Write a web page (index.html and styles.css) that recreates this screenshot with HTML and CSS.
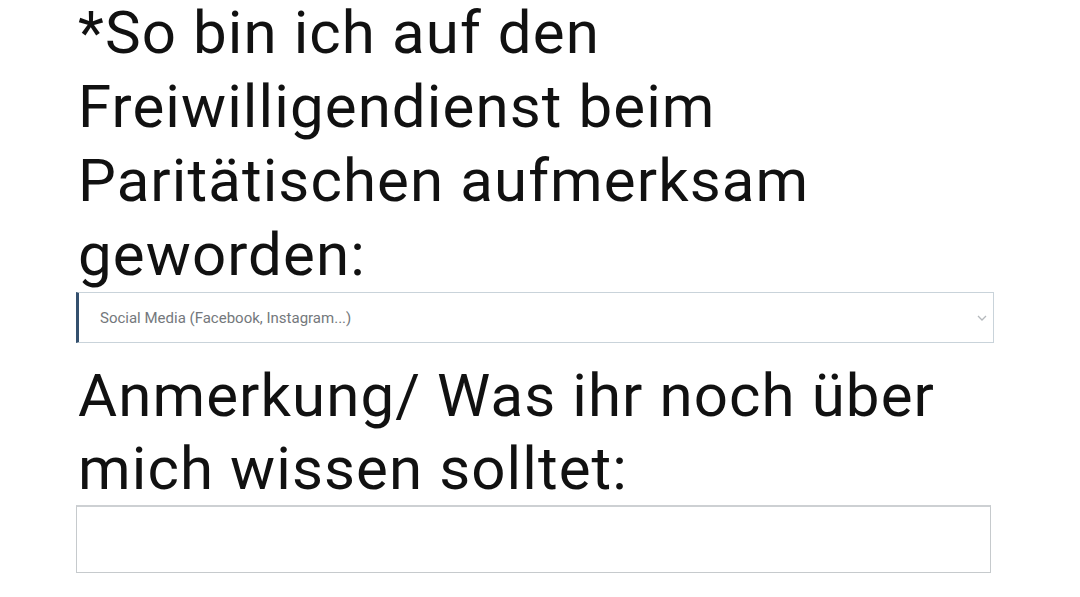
FILE: index.html
```html
<!DOCTYPE html>
<html lang="de">
<head>
<meta charset="utf-8">
<title>Formular</title>
<link rel="stylesheet" href="styles.css">
</head>
<body>
<main class="form">
  <label class="question q-first">*So bin ich auf den Freiwilligendienst beim Paritätischen aufmerksam geworden:</label>
  <div class="select">
    <span class="select-value">Social Media (Facebook, Instagram...)</span>
    <svg class="chevron" width="10" height="6" viewBox="0 0 10 6"><path d="M1 1 L5 5 L9 1" fill="none" stroke="#b4b8bc" stroke-width="1.3"/></svg>
  </div>
  <label class="question q-second">Anmerkung/ Was ihr noch über mich wissen solltet:</label>
  <div class="textarea"></div>
</main>
</body>
</html>
```
FILE: styles.css
```css
html, body {
  margin: 0;
  padding: 0;
  background: #ffffff;
}
.form {
  display: flex;
  flex-direction: column;
  align-items: flex-start;
  padding-left: 76px;
  padding-top: 2px;
  width: 920px;
}
.question {
  display: block;
  font-family: Roboto, "Noto Sans", sans-serif;
  font-size: 60px;
  line-height: 74px;
  letter-spacing: 1.1px;
  color: #111111;
  padding-left: 2px;
  width: 850px;
}
.q-first {
  margin-top: -6px;
}
.q-second {
  margin-top: 16px;
  line-height: 73px;
  width: 915px;
}
.select {
  box-sizing: border-box;
  width: 918px;
  height: 51px;
  border: 1px solid #c9d3da;
  border-left: 3px solid #34506e;
  display: flex;
  align-items: center;
  justify-content: space-between;
  padding: 0 6px 0 21px;
}
.select-value {
  font-family: Roboto, "Noto Sans", sans-serif;
  font-size: 15px;
  color: #74787c;
}
.textarea {
  box-sizing: border-box;
  width: 915px;
  height: 68px;
  border: 1px solid #c6cacd;
  border-top: 2px solid #cdd0d3;
}
```
